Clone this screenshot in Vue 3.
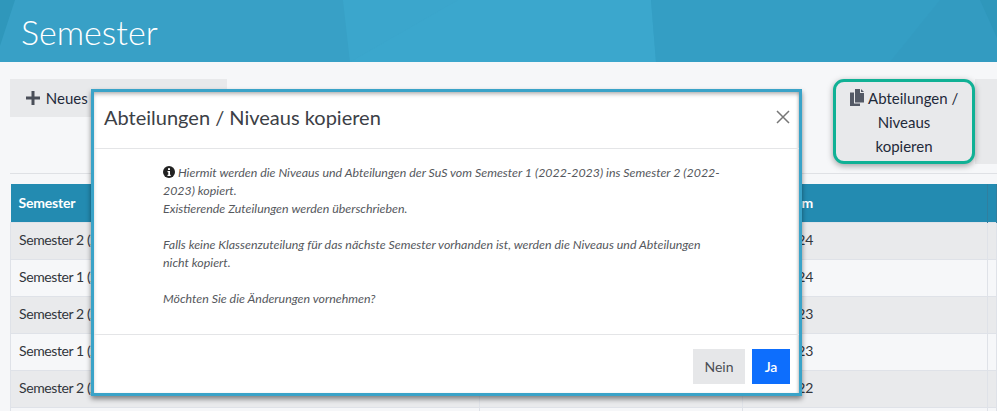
<script setup>
const rows = [
  ['Semester 2 (2023-2024)', '1.2.2024', '31.7.2024'],
  ['Semester 1 (2023-2024)', '1.8.2023', '31.1.2024'],
  ['Semester 2 (2022-2023)', '1.2.2023', '31.7.2023'],
  ['Semester 1 (2022-2023)', '1.8.2022', '31.1.2023'],
  ['Semester 2 (2021-2022)', '1.2.2022', '31.7.2022'],
  ['Semester 1 (2021-2022)', '1.8.2021', '31.1.2022'],
]
</script>

<template>
  <div class="page">
    <header class="banner">
      <svg class="facets" viewBox="0 0 997 62" preserveAspectRatio="none" aria-hidden="true">
        <polygon points="0,0 15,0 0,46" fill="#2f97bb" />
        <polygon points="343,0 651,0 656,62 350,62" fill="#3ba6cc" />
        <polygon points="458,0 651,0 656,62 350,62" fill="#3ca7cd" opacity=".5" />
        <polygon points="651,0 997,0 997,62 656,62" fill="#349ec4" />
        <polygon points="940,0 997,0 997,62 890,62" fill="#339bc1" />
        <polygon points="980,0 997,0 997,38" fill="#2f97bb" />
      </svg>
      <h1>Semester</h1>
    </header>
    <main class="content">
      <div class="toolbar">
        <button class="tool new">
          <svg class="plus" viewBox="0 0 14 14"><path d="M5.5 0h3v5.5H14v3H8.500V14h-3V8.500H0v-3h5.500z" /></svg>
          Neues Semester erstellen
        </button>
        <div class="right">
          <button class="tool copy">
            <svg class="copyicon" viewBox="0 0 15 17"><path d="M5 0h5v4h4v9.500H5z" /><path d="M11 0l3 3h-3z" /><path d="M0 3.500h4v11h6V17H0z" /></svg>
            Abteilungen / Niveaus kopieren
          </button>
          <button class="tool stub"></button>
        </div>
      </div>
      <hr class="rule" />
      <table>
        <colgroup>
          <col class="c1" /><col class="c2" /><col class="c3" /><col />
        </colgroup>
        <thead>
          <tr><th>Semester</th><th>Startdatum</th><th>Enddatum</th><th></th></tr>
        </thead>
        <tbody>
          <tr v-for="r in rows" :key="r[0]">
            <td>{{ r[0] }}</td><td>{{ r[1] }}</td><td class="end">{{ r[2] }}</td><td></td>
          </tr>
        </tbody>
      </table>
    </main>

    <section class="modal">
      <div class="m-head">
        <h2>Abteilungen / Niveaus kopieren</h2>
        <svg class="close" viewBox="0 0 14 14"><path d="M1 1l12 12M13 1L1 13" /></svg>
      </div>
      <div class="m-body">
        <p>
          <svg class="info" viewBox="0 0 12 12"><circle cx="6" cy="6" r="6" /><rect x="5" y="2.200" width="2" height="1.800" fill="#fff" /><path d="M4.500 5h2.500v3.800h.7V10H4.500V8.800h.8V6.200h-.8z" fill="#fff" /></svg>
          Hiermit werden die Niveaus und Abteilungen der SuS vom Semester 1 (2022-2023) ins Semester 2 (2022-<wbr />2023) kopiert.<br />
          Existierende Zuteilungen werden überschrieben.<br /><br />
          Falls keine Klassenzuteilung für das nächste Semester vorhanden ist, werden die Niveaus und Abteilungen nicht kopiert.<br /><br />
          Möchten Sie die Änderungen vornehmen?
        </p>
      </div>
      <div class="m-foot">
        <button class="no">Nein</button>
        <button class="yes">Ja</button>
      </div>
    </section>
  </div>
</template>

<style>
html, body { margin: 0; overflow: hidden; }
</style>

<style scoped>
.page {
  position: relative;
  width: 997px;
  height: 411px;
  overflow: hidden;
  background: #f6f7f9;
  font-family: Lato, sans-serif;
  color: #32363c;
}
.banner {
  position: relative;
  height: 62px;
  background: #38a0c6;
  display: flex;
  align-items: center;
  padding-left: 21px;
}
.facets { position: absolute; inset: 0; width: 100%; height: 100%; }
h1 {
  position: relative;
  margin: 0;
  font-size: 34px;
  font-weight: 300;
  color: #fff;
}
.content { padding: 17px 0 0 10px; }
.toolbar { display: flex; justify-content: space-between; align-items: flex-start; }
.tool {
  border: 0;
  background: #e8e9eb;
  font: inherit;
  font-size: 15px;
  line-height: 24px;
  color: #1f2a3a;
}
.new {
  width: 217px;
  height: 38px;
  padding: 0 0 0 16px;
  text-align: left;
  white-space: nowrap;
  word-spacing: 2px;
}
.plus { width: 14px; height: 14px; fill: #4a4f59; vertical-align: -1px; }
.right { display: flex; align-items: stretch; }
.copy {
  box-sizing: border-box;
  width: 142px;
  height: 85px;
  padding: 0 12px;
  border: 3px solid #10b195;
  border-radius: 11px;
  box-shadow: 0 2px 6px rgba(0, 0, 0, .35);
  position: relative;
  z-index: 1;
}
.copyicon { width: 15px; height: 17px; fill: #545a66; vertical-align: -2px; }
.stub { width: 22px; height: 85px; }
.rule { margin: 9px 0 10px; border: 0; border-top: 1px solid #dfe1e5; }
table { width: 987px; border-collapse: collapse; table-layout: fixed; font-size: 14px; }
.c1 { width: 469px; }
.c2 { width: 263px; }
.c3 { width: 245px; }
th {
  box-sizing: border-box;
  height: 38px;
  padding: 0 8px 0 8px;
  background: #238bb1;
  color: #fff;
  text-align: left;
  font-size: 14px;
  font-weight: 700;
  letter-spacing: -.2px;
  border-right: 1px solid #2f7fa0;
}
td {
  box-sizing: border-box;
  height: 37px;
  padding: 0 8px 3px 8px;
  border: 1px solid #dfe2e8;
  white-space: nowrap;
  letter-spacing: -.4px;
}
td.end { letter-spacing: -.15px; }
tbody tr:nth-child(odd) td { background: #e9eaec; }

.modal {
  position: absolute;
  left: 91px;
  top: 89px;
  width: 711px;
  height: 307px;
  box-sizing: border-box;
  border: 3px solid #3aa3c8;
  background: #fff;
  box-shadow: 0 3px 5px rgba(0, 0, 0, .45), inset 0 3px 4px -1px rgba(0, 0, 0, .3), inset -2px 0 3px -1px rgba(0, 0, 0, .15);
  display: flex;
  flex-direction: column;
}
.m-head {
  height: 57px;
  box-sizing: border-box;
  flex: none;
  border-bottom: 1px solid #e4e5e7;
  display: flex;
  align-items: center;
  justify-content: space-between;
  padding: 0 9px 6px 10px;
}
h2 { margin: 0; font-size: 20px; letter-spacing: 0; font-weight: 400; color: #3c4046; }
.close { width: 14px; height: 14px; stroke: #777; stroke-width: 1.500; fill: none; }
.m-body { flex: 1; padding: 15px 74px 0 69px; }
p {
  margin: 0;
  font-size: 12.400px;
  line-height: 18px;
  font-style: italic;
  color: #55585d;
}
.info { width: 12px; height: 12px; fill: #222; vertical-align: -1px; }
.m-foot {
  height: 59px;
  box-sizing: border-box;
  flex: none;
  border-top: 1px solid #e4e5e7;
  display: flex;
  justify-content: flex-end;
  align-items: flex-start;
  gap: 7px;
  padding: 14px 9px 0 0;
}
.m-foot button { height: 35px; border: 1px solid transparent; font: inherit; font-size: 14px; }
.no { width: 52px; background: #e6e7e9; color: #4b4e54; border-color: #eef0f2; }
.yes { width: 38px; background: #0d6efd; color: #fff; border-color: #8ab6fb; font-weight: 600 !important; }
</style>
